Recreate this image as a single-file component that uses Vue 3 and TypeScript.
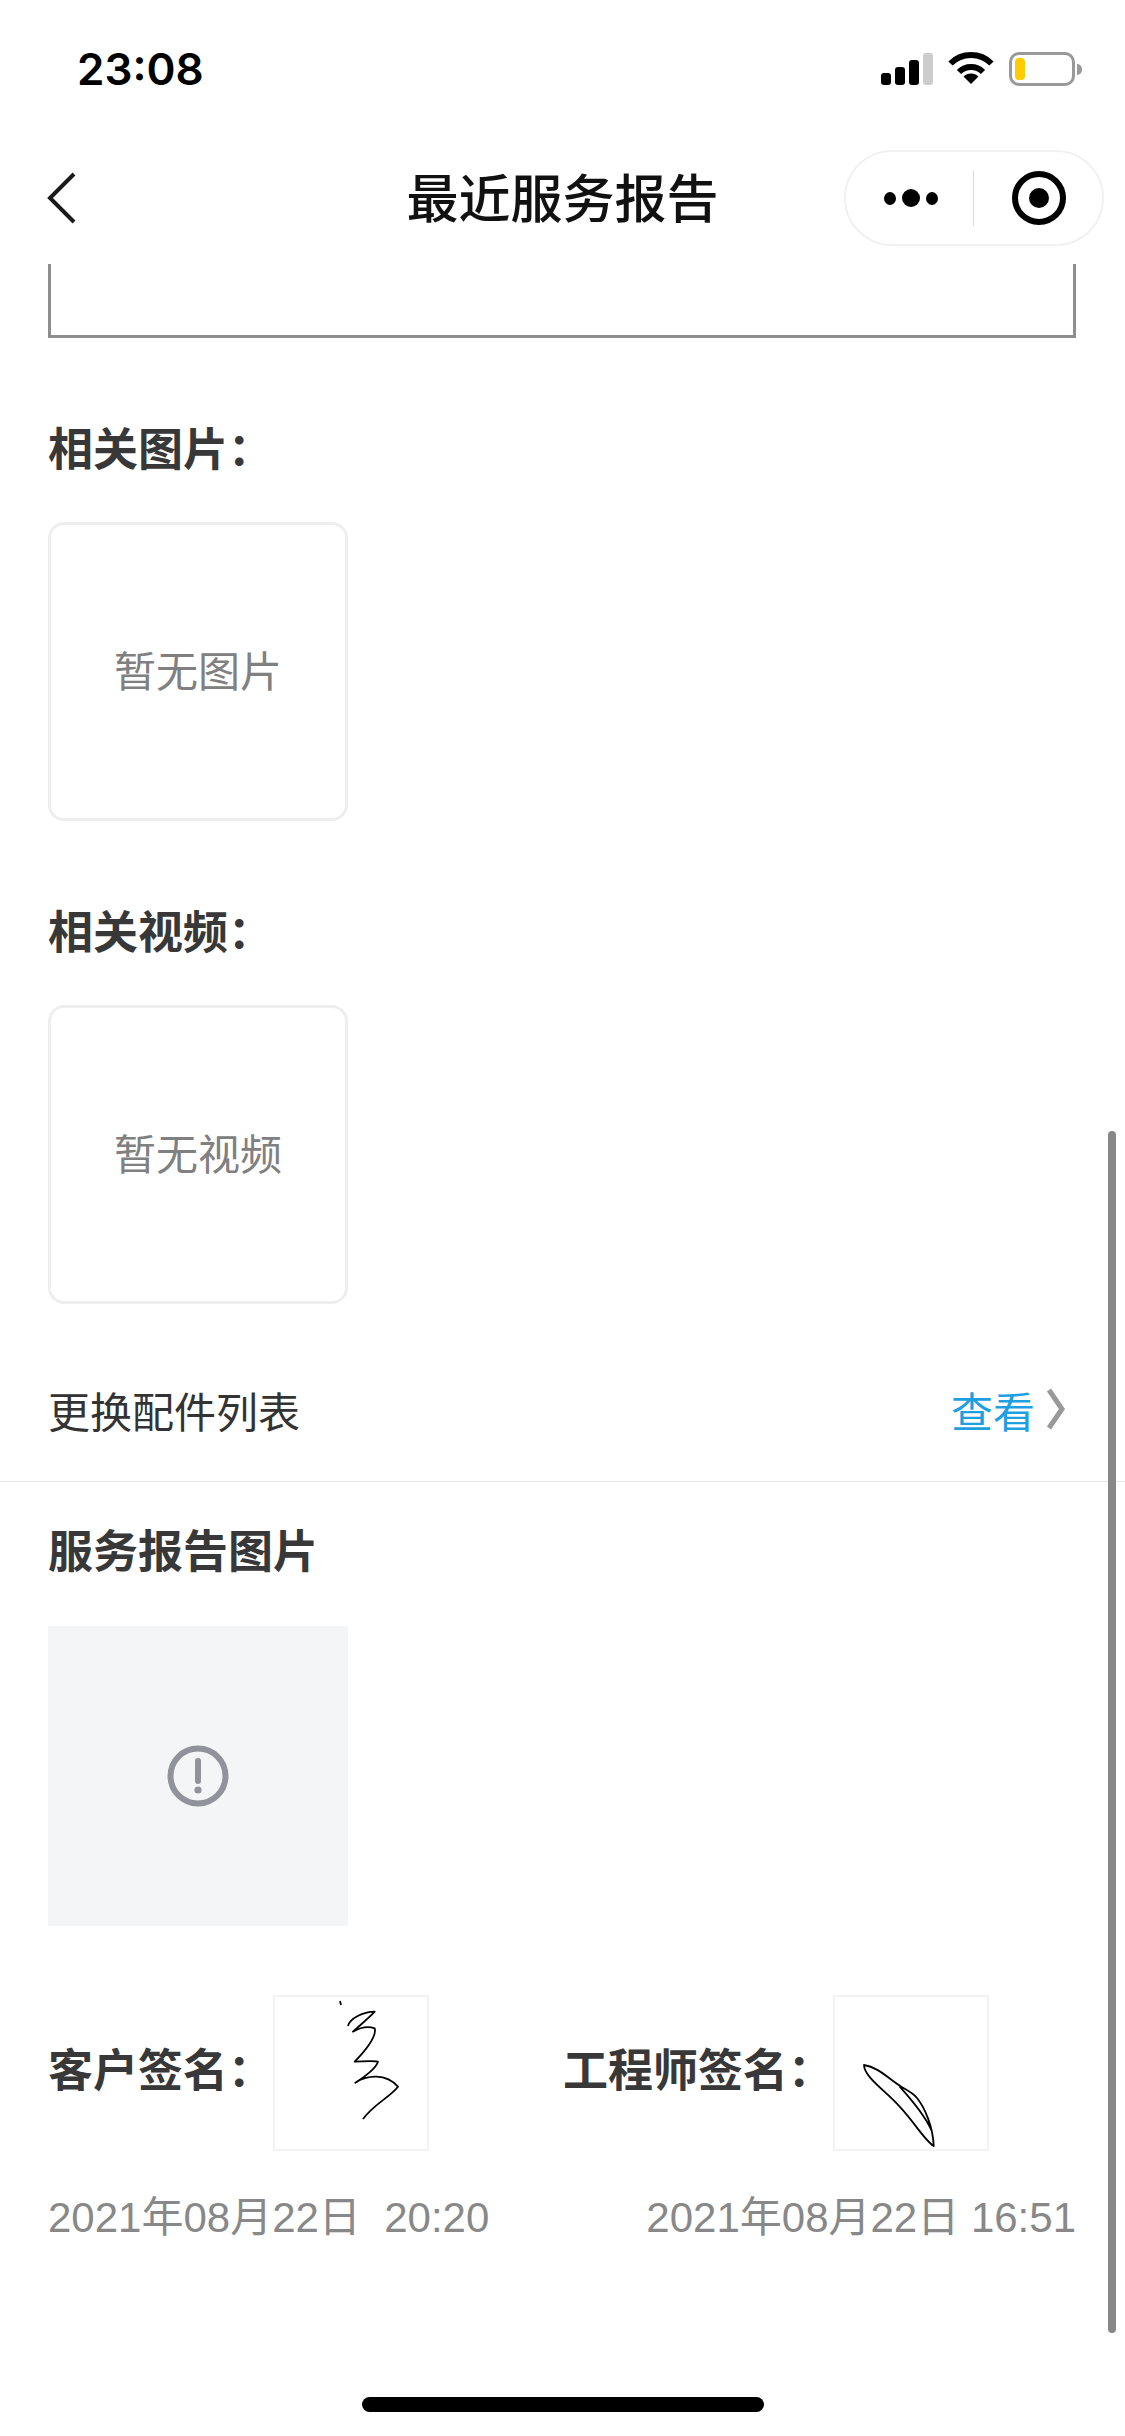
<script setup lang="ts">
interface MediaSection {
  title: string;
  empty: string;
}

const sections: MediaSection[] = [
  { title: '相关图片：', empty: '暂无图片' },
  { title: '相关视频：', empty: '暂无视频' }
]

const signalBars = [12, 18, 25, 32]
</script>

<template>
  <div class="page">
    <div class="status-bar">
      <span class="time">23:08</span>
      <div class="status-icons">
        <div class="signal">
          <span
            v-for="(h, i) in signalBars"
            :key="i"
            class="bar"
            :class="{ off: i === 3 }"
            :style="{ height: h + 'px' }"
          />
        </div>
        <svg class="wifi" width="46" height="32" viewBox="0 0 46 32">
          <path d="M2.500 11.500A29 29 0 0 1 43.500 11.500" fill="none" stroke="#000" stroke-width="6" />
          <path d="M11 20A17 17 0 0 1 35 20" fill="none" stroke="#000" stroke-width="6" />
          <path d="M23 32L15.500 24.500A10.600 10.600 0 0 1 30.500 24.500Z" fill="#000" />
        </svg>
        <div class="battery">
          <div class="battery-body"><span class="battery-level" /></div>
          <span class="battery-nub" />
        </div>
      </div>
    </div>

    <div class="nav-bar">
      <svg class="back" width="30" height="52" viewBox="0 0 30 52">
        <path d="M27 2L3 26L27 50" fill="none" stroke="#1a1a1a" stroke-width="4" />
      </svg>
      <h1 class="nav-title">最近服务报告</h1>
      <div class="capsule">
        <div class="capsule-more">
          <span class="dot" /><span class="dot big" /><span class="dot" />
        </div>
        <span class="capsule-line" />
        <svg width="54" height="54" viewBox="0 0 54 54">
          <circle cx="27" cy="27" r="24" fill="none" stroke="#000" stroke-width="6" />
          <circle cx="27" cy="27" r="10" fill="#000" />
        </svg>
      </div>
    </div>

    <div class="remark-end" />

    <section v-for="s in sections" :key="s.title" class="media">
      <h2 class="heading">{{ s.title }}</h2>
      <div class="empty-box">{{ s.empty }}</div>
    </section>

    <div class="parts-row">
      <span>更换配件列表</span>
      <div class="parts-link">
        <span>查看</span>
        <svg width="20" height="42" viewBox="0 0 20 42">
          <path d="M3 2L16 21L3 40" fill="none" stroke="#999" stroke-width="5" />
        </svg>
      </div>
    </div>

    <h2 class="heading report-heading">服务报告图片</h2>
    <div class="report-image">
      <svg width="62" height="62" viewBox="0 0 62 62">
        <circle cx="31" cy="31" r="27.500" fill="none" stroke="#909399" stroke-width="6" />
        <path d="M31 16V36" stroke="#909399" stroke-width="6" stroke-linecap="round" />
        <circle cx="31" cy="45" r="3.600" fill="#909399" />
      </svg>
    </div>

    <div class="sign-row">
      <div class="sign-item">
        <span class="sign-label">客户签名：</span>
        <div class="sign-box">
          <svg width="152" height="152" viewBox="2 2 152 152">
            <path
              d="M67 6L68 10M75 31C77 23 90 17 101.700 16.700C95 24 86 31 80 36.700C88 32 95 31 101.700 33.300C104 42 92 56 81.700 66.700C92 66 105 66 105 66.700C103 73 92 82 82.300 87.700C94 80 113 78 125 91.700C117 102 100 110 90 124"
              fill="none"
              stroke="#000"
              stroke-width="1.800"
              stroke-linejoin="round"
            />
          </svg>
        </div>
      </div>
      <div class="sign-item">
        <span class="sign-label">工程师签名：</span>
        <div class="sign-box">
          <svg width="152" height="152" viewBox="2 2 152 152">
            <path
              d="M31 70C45 72 56 84 68.300 91.700C76 96 82 100 84 103C92 113 100 132 100.700 151C92 146 82 128 66.700 111.700C54 97 31 82 31 70ZM66.700 91.700C76 102 92 121 98.300 135"
              fill="none"
              stroke="#000"
              stroke-width="1.800"
              stroke-linejoin="round"
            />
          </svg>
        </div>
      </div>
    </div>

    <div class="date-row">
      <span>2021年08月22日&nbsp; 20:20</span>
      <span>2021年08月22日 16:51</span>
    </div>

    <span class="scrollbar" />
    <span class="home-bar" />
  </div>
</template>

<style scoped>
.page {
  position: relative;
  width: 1125px;
  height: 2436px;
  overflow: hidden;
  background: #fff;
  font-family: "Liberation Sans", "Noto Sans CJK SC", sans-serif;
  color: #333;
}

.status-bar {
  height: 150px;
  box-sizing: border-box;
  padding: 44px 43px 0 77px;
  display: flex;
  justify-content: space-between;
  align-items: flex-start;
}

.time {
  font-family: Inter, "Liberation Sans", sans-serif;
  font-size: 44px;
  font-weight: 600;
  line-height: 50px;
  color: #000;
}

.status-icons {
  display: flex;
  align-items: flex-start;
  padding-top: 8px;
}

.signal {
  display: flex;
  align-items: flex-end;
  gap: 4px;
  height: 33px;
}

.bar {
  width: 10px;
  border-radius: 3px;
  background: #000;
}

.bar.off {
  background: #ccc;
}

.wifi {
  margin-left: 15px;
}

.battery {
  margin-left: 15px;
  display: flex;
  align-items: center;
}

.battery-body {
  width: 66px;
  height: 34px;
  box-sizing: border-box;
  border: 3px solid #999;
  border-radius: 10px;
  padding: 3px;
}

.battery-level {
  display: block;
  width: 10px;
  height: 100%;
  border-radius: 4px;
  background: #fc0;
}

.battery-nub {
  width: 5px;
  height: 11px;
  margin-left: 2px;
  border-radius: 0 5px 5px 0;
  background: #999;
}

.nav-bar {
  position: relative;
  height: 114px;
  box-sizing: border-box;
  padding: 0 21px 18px 47px;
  display: flex;
  align-items: center;
  justify-content: space-between;
}

.nav-title {
  position: absolute;
  left: 0;
  right: 0;
  top: 16px;
  margin: 0;
  text-align: center;
  font-size: 52px;
  font-weight: 500;
  line-height: 68px;
  color: #111;
}

.capsule {
  width: 260px;
  height: 96px;
  box-sizing: border-box;
  border: 2px solid #f1f1f1;
  border-radius: 48px;
  display: flex;
  align-items: center;
  padding: 0 16px 0 38px;
}

.capsule-more {
  display: flex;
  align-items: center;
  gap: 6px;
}

.dot {
  width: 12px;
  height: 13px;
  border-radius: 50%;
  background: #000;
}

.dot.big {
  width: 18px;
  height: 18px;
}

.capsule-line {
  width: 1px;
  height: 56px;
  margin: 0 38px 0 35px;
  background: #ddd;
}

.remark-end {
  height: 74px;
  margin: 0 49px 0 48px;
  box-sizing: border-box;
  border: 3px solid #8e8e8e;
  border-top: 0;
}

.media {
  margin: 81px 0 0 48px;
}

.heading {
  margin: 0;
  padding-top: 2px;
  font-size: 45px;
  font-weight: 600;
  line-height: 60px;
  color: #383838;
}

.empty-box {
  width: 300px;
  height: 299px;
  margin-top: 41px;
  box-sizing: border-box;
  border: 3px solid #eee;
  border-radius: 16px;
  padding-bottom: 6px;
  display: flex;
  align-items: center;
  justify-content: center;
  font-size: 42px;
  color: #808080;
}

.parts-row {
  height: 137px;
  margin-top: 41px;
  box-sizing: border-box;
  padding: 0 59px 8px 48px;
  border-bottom: 1px solid #e5e5e5;
  display: flex;
  align-items: center;
  justify-content: space-between;
  font-size: 42px;
  color: #333;
}

.parts-link {
  display: flex;
  align-items: center;
  gap: 11px;
  color: #1e9fe0;
}

.report-heading {
  margin: 39px 0 0 48px;
}

.report-image {
  width: 300px;
  height: 300px;
  margin: 43px 0 0 48px;
  background: #f3f5f7;
  display: flex;
  align-items: center;
  justify-content: center;
}

.sign-row {
  margin-top: 69px;
  padding: 0 136px 0 48px;
  display: flex;
  justify-content: space-between;
}

.sign-item {
  display: flex;
  align-items: center;
}

.sign-label {
  margin-bottom: 12px;
  font-size: 45px;
  font-weight: 600;
  color: #383838;
}

.sign-box {
  width: 156px;
  height: 156px;
  box-sizing: border-box;
  border: 2px solid #f3f3f3;
}

.sign-box svg {
  display: block;
}

.date-row {
  margin-top: 42px;
  padding: 0 49px 0 48px;
  display: flex;
  justify-content: space-between;
  font-size: 42px;
  line-height: 50px;
  color: #888;
}

.scrollbar {
  position: absolute;
  left: 1108px;
  top: 1131px;
  width: 8px;
  height: 1202px;
  border-radius: 4px;
  background: #888;
}

.home-bar {
  position: absolute;
  left: 362px;
  top: 2397px;
  width: 402px;
  height: 15px;
  border-radius: 8px;
  background: #000;
}
</style>
